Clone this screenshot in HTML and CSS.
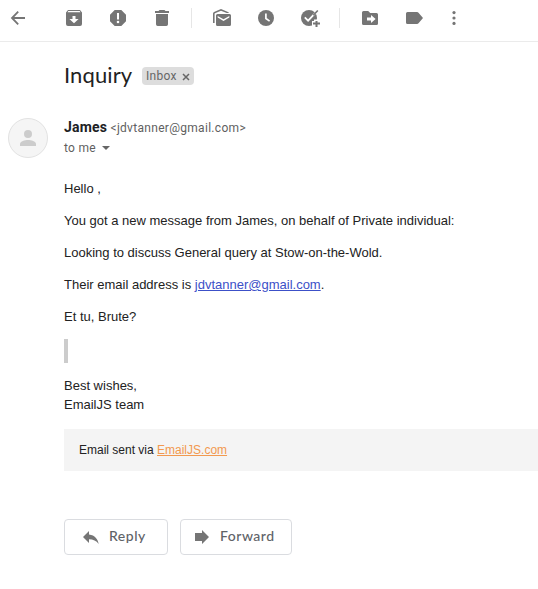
FILE: index.html
```html
<!DOCTYPE html>
<html lang="en">
<head>
<meta charset="utf-8">
<title>Inquiry</title>
<link rel="stylesheet" href="styles.css">
</head>
<body>
<header class="toolbar">
  <svg class="icon back" viewBox="0 0 20 20"><path d="M17 10H4.500M10.200 3.700L4 10l6.200 6.300" fill="none" stroke="#757575" stroke-width="1.800"/></svg>
  <div class="group">
    <svg class="icon" viewBox="0 0 20 20"><path fill-rule="evenodd" d="M4 2h12l2 2.400V16a2 2 0 0 1-2 2H4a2 2 0 0 1-2-2V4.400zM4.300 3.100L3.500 4.200h13l-.8-1.100zM8.500 8v3H5.400L10 15.300l4.600-4.300h-3.100V8z"/></svg>
    <svg class="icon" viewBox="0 0 20 20"><path fill-rule="evenodd" d="M6.700 2h6.600L18 6.700v6.600L13.300 18H6.700L2 13.300V6.700zM9 5v6.500h2V5zM10 12.700a1.300 1.300 0 1 0 0 2.600 1.300 1.300 0 0 0 0-2.600z"/></svg>
    <svg class="icon" viewBox="0 0 20 20"><path d="M7.500 2h5l1 1H17v2H3V3h3.500zM4 6h12v10.300a1.700 1.700 0 0 1-1.700 1.700H5.700A1.700 1.700 0 0 1 4 16.300z"/></svg>
  </div>
  <span class="separator"></span>
  <div class="group">
    <svg class="icon" viewBox="0 0 20 20"><path d="M1 15V5.500Q1 4.400 2 3.900L9 1l7 2.900Q16.800 4.300 17 5h-2.300L9 2.700 3 5.300Q2.600 5.500 2.600 6v9z"/><path fill-rule="evenodd" d="M5.500 6h12A1.500 1.500 0 0 1 19 7.500v9a1.500 1.500 0 0 1-1.500 1.500h-12A1.500 1.500 0 0 1 4 16.500v-9A1.500 1.500 0 0 1 5.500 6zM5.700 8v1.600l5.800 3.400 5.800-3.400V8l-5.800 3.300z"/></svg>
    <svg class="icon" viewBox="0 0 20 20"><circle cx="10" cy="10" r="8"/><path d="M9.900 5.500v5l3.700 2.600" class="cut"/></svg>
    <svg class="icon" viewBox="0 0 20 20"><circle cx="9" cy="10" r="8"/><path d="M4.800 9.300l3.300 3.400 9-9.500" class="cut"/><path d="M13.300 7.200l4.500-4.700" fill="none" stroke="#757575" stroke-width="1.600"/><path d="M12 13h2V11.500h6V20h-8z" fill="#fff"/><path d="M16 12.500h2V14h2.500v2H18v2.500h-2V16h-2.500v-2H16z" transform="translate(-.5 .5)"/></svg>
  </div>
  <span class="separator"></span>
  <div class="group">
    <svg class="icon" viewBox="0 0 20 20"><path fill-rule="evenodd" d="M3.500 3h4.700l2 2h6.300A1.500 1.500 0 0 1 18 6.500v9a1.500 1.500 0 0 1-1.500 1.500h-13A1.500 1.500 0 0 1 2 15.500v-11A1.500 1.500 0 0 1 3.500 3zM7 9.500v3h4V15l4.600-4L11 7v2.500z"/></svg>
    <svg class="icon" viewBox="0 0 20 20"><path d="M3.500 4H13a2 2 0 0 1 1.500.8L19 10l-4.500 5.200A2 2 0 0 1 13 16H3.500A1.500 1.500 0 0 1 2 14.500v-9A1.500 1.500 0 0 1 3.500 4z"/></svg>
  </div>
  <svg class="icon more" viewBox="0 0 20 20"><circle cx="10" cy="4.600" r="1.600"/><circle cx="10" cy="10" r="1.600"/><circle cx="10" cy="15.400" r="1.600"/></svg>
</header>
<main>
  <div class="subject">
    <h1>Inquiry</h1>
    <span class="chip">Inbox <svg class="close" viewBox="0 0 8 8"><path d="M1 1l6 6M7 1L1 7" fill="none" stroke="#666" stroke-width="1.500"/></svg></span>
  </div>
  <div class="sender">
    <div class="avatar"><svg viewBox="0 0 16 16"><circle cx="8" cy="4" r="4"/><path d="M0 16v-2c0-2.700 5-4 8-4s8 1.300 8 4v2z"/></svg></div>
    <div>
      <div class="from"><b>James</b> <span class="address">&lt;jdvtanner@gmail.com&gt;</span></div>
      <div class="to">to me <i class="caret"></i></div>
    </div>
  </div>
  <article>
    <p>Hello ,</p>
    <p>You got a new message from James, on behalf of Private individual:</p>
    <p>Looking to discuss General query at Stow-on-the-Wold.</p>
    <p>Their email address is <a href="#">jdvtanner@gmail.com</a>.</p>
    <p>Et tu, Brute?</p>
    <blockquote></blockquote>
    <p class="signature">Best wishes,<br>EmailJS team</p>
    <footer>Email sent via <a href="#">EmailJS.com</a></footer>
  </article>
  <div class="actions">
    <button class="reply"><svg class="icon" viewBox="0 0 20 20"><path d="M8 7.500V4L2 10l6 6v-3.700c4.200 0 7.300 1.500 9.700 4.700-1-5-3.700-8.700-9.700-9.500z"/></svg><span>Reply</span></button>
    <button class="forward"><svg class="icon" viewBox="0 0 20 20"><path d="M2 6h7V3l7 7-7 7v-3H2z"/></svg><span>Forward</span></button>
  </div>
</main>
</body>
</html>
```
FILE: styles.css
```css
* { box-sizing: border-box; }
body {
  margin: 0;
  background: #fff;
  color: #222;
  font-family: "Liberation Sans", Arial, sans-serif;
  overflow: hidden;
}
.toolbar {
  display: flex;
  height: 42px;
  padding: 8px 8px 0;
  border-bottom: 1px solid #ebebeb;
}
.icon { display: block; width: 20px; height: 20px; flex: none; fill: #757575; overflow: visible; }
.cut { fill: none; stroke: #fff; stroke-width: 1.7; }
.back { margin-right: 36px; }
.group { display: flex; gap: 24px; }
.separator { width: 1px; height: 20px; margin: 0 20px 0 19px; background: #e6e6e6; }
.more { margin-left: 20px; }
.subject { display: flex; align-items: center; height: 28px; margin: 20px 0 0 64px; }
h1 {
  width: 78px;
  margin: 0;
  padding-bottom: 2px;
  font: 400 22px/26px Lato, sans-serif;
  letter-spacing: .1px;
  white-space: nowrap;
}
.chip {
  display: flex;
  align-items: center;
  width: 52px;
  height: 18px;
  padding-left: 4px;
  border-radius: 4px;
  background: #ddd;
  color: #666;
  font: 12px/18px Roboto, sans-serif;
  letter-spacing: .3px;
}
.close { width: 8px; height: 8px; margin: 1px 0 0 5px; }
.sender { display: flex; margin: 28px 0 0 8px; font-family: Roboto, sans-serif; color: #5f5f5f; }
.avatar {
  display: grid;
  place-items: center;
  width: 40px;
  height: 40px;
  margin-right: 16px;
  border: 1px solid #e2e2e2;
  border-radius: 50%;
  background: #f5f5f5;
}
.avatar svg { width: 16px; height: 16px; fill: #ccc; }
.from { height: 19px; font-size: 12px; line-height: 18px; white-space: nowrap; letter-spacing: .3px; }
.from b { color: #202124; font-size: 14px; letter-spacing: .2px; }
.to { display: flex; align-items: center; height: 22px; font-size: 12px; letter-spacing: .3px; }
.caret { margin-left: 6px; border: 4px solid transparent; border-top-color: #666; border-bottom: 0; }
article { margin: 20px 0 0 64px; font-size: 13px; line-height: 19px; }
p { margin: 0 0 13px; white-space: nowrap; }
a { color: #3c50c8; }
blockquote { width: 4px; height: 24px; margin: 0 0 13px; background: #ccc; }
.signature { margin-bottom: 15px; }
footer { height: 42px; padding: 0 15px; background: #f4f4f4; font-size: 12px; line-height: 42px; }
footer a { color: #f2994f; }
.actions { display: flex; gap: 12px; margin: 48px 0 0 64px; }
button {
  display: flex;
  align-items: center;
  height: 36px;
  padding: 0 0 0 16px;
  border: 1px solid #dadce0;
  border-radius: 4px;
  background: #fff;
  color: #5f6368;
  font: 500 14px/32px Lato, sans-serif;
  letter-spacing: .5px;
}
button span { padding-bottom: 2px; }
.reply { width: 104px; gap: 8px; }
.forward { width: 112px; padding-left: 12px; gap: 7px; }
```
